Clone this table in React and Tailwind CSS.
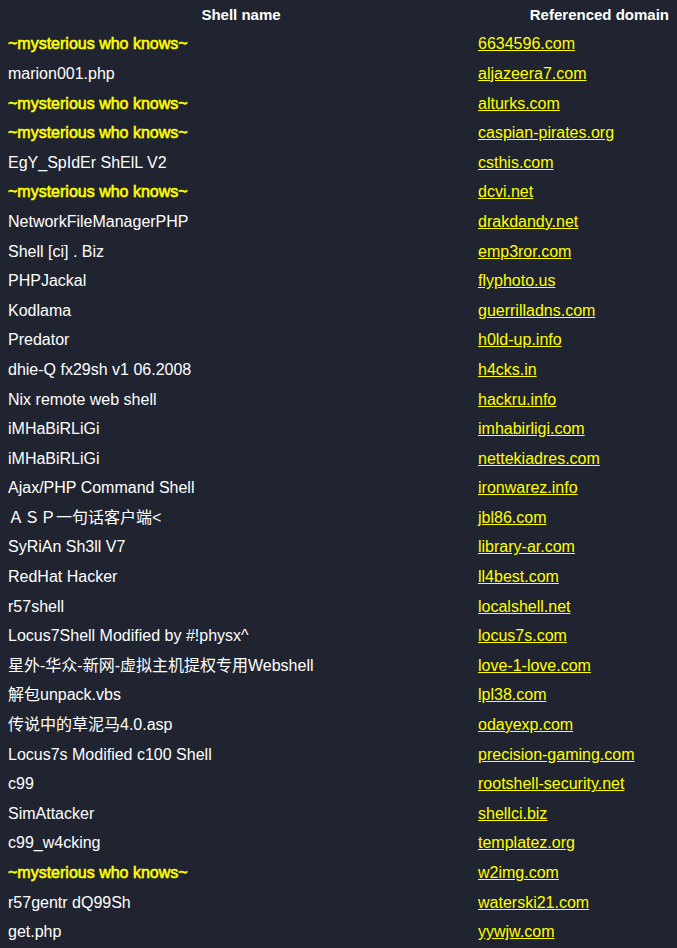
const MYSTERY = "~mysterious who knows~";

const rows = [
  [MYSTERY, "6634596.com"],
  ["marion001.php", "aljazeera7.com"],
  [MYSTERY, "alturks.com"],
  [MYSTERY, "caspian-pirates.org"],
  ["EgY_SpIdEr ShElL V2", "csthis.com"],
  [MYSTERY, "dcvi.net"],
  ["NetworkFileManagerPHP", "drakdandy.net"],
  ["Shell [ci] . Biz", "emp3ror.com"],
  ["PHPJackal", "flyphoto.us"],
  ["Kodlama", "guerrilladns.com"],
  ["Predator", "h0ld-up.info"],
  ["dhie-Q fx29sh v1 06.2008", "h4cks.in"],
  ["Nix remote web shell", "hackru.info"],
  ["iMHaBiRLiGi", "imhabirligi.com"],
  ["iMHaBiRLiGi", "nettekiadres.com"],
  ["Ajax/PHP Command Shell", "ironwarez.info"],
  ["ＡＳＰ一句话客户端<", "jbl86.com"],
  ["SyRiAn Sh3ll V7", "library-ar.com"],
  ["RedHat Hacker", "ll4best.com"],
  ["r57shell", "localshell.net"],
  ["Locus7Shell Modified by #!physx^", "locus7s.com"],
  ["星外-华众-新网-虚拟主机提权专用Webshell", "love-1-love.com"],
  ["解包unpack.vbs", "lpl38.com"],
  ["传说中的草泥马4.0.asp", "odayexp.com"],
  ["Locus7s Modified c100 Shell", "precision-gaming.com"],
  ["c99", "rootshell-security.net"],
  ["SimAttacker", "shellci.biz"],
  ["c99_w4cking", "templatez.org"],
  [MYSTERY, "w2img.com"],
  ["r57gentr dQ99Sh", "waterski21.com"],
  ["get.php", "yywjw.com"],
];

export default function App() {
  return (
    <div className="min-h-screen w-full bg-[#1f2430] text-white font-['Liberation_Sans','Noto_Sans_CJK_SC',sans-serif] text-[16px]">
      <table className="w-full border-collapse">
        <thead>
          <tr className="h-[29.6px]">
            <th className="w-[470px] pl-[20px] pr-2 text-center text-[15px] font-bold leading-[18px]">
              Shell name
            </th>
            <th className="px-2 text-right text-[15px] font-bold leading-[18px]">
              Referenced domain
            </th>
          </tr>
        </thead>
        <tbody>
          {rows.map(([name, domain], i) => (
            <tr key={i} className="h-[29.6px]">
              <td className="px-2 leading-[18px] whitespace-nowrap">
                {name === MYSTERY ? (
                  <span className="text-[#ffff00] [-webkit-text-stroke:0.6px_#ffff00]">{name}</span>
                ) : (
                  name
                )}
              </td>
              <td className="px-2 leading-[18px] whitespace-nowrap">
                <a href="#" className="text-[#ffff00] underline">
                  {domain}
                </a>
              </td>
            </tr>
          ))}
        </tbody>
      </table>
    </div>
  );
}
